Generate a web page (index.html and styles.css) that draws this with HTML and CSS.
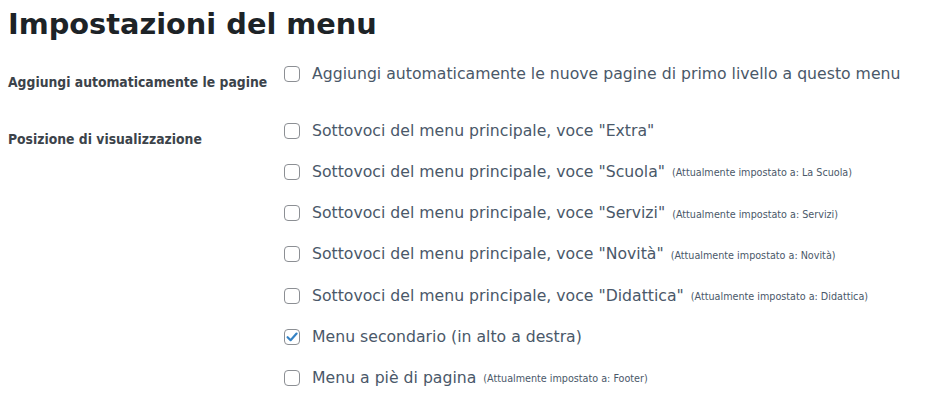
FILE: index.html
```html
<!DOCTYPE html>
<html lang="it">
<head>
<meta charset="utf-8">
<title>Impostazioni del menu</title>
<link rel="stylesheet" href="styles.css">
</head>
<body>
<h2 class="title">Impostazioni del menu</h2>
<div class="form">
  <div class="label">Aggiungi automaticamente le pagine</div>
  <ul class="options">
    <li class="opt"><span class="cb"></span><span class="txt">Aggiungi automaticamente le nuove pagine di primo livello a questo menu</span></li>
  </ul>
  <div class="label">Posizione di visualizzazione</div>
  <ul class="options">
    <li class="opt"><span class="cb"></span><span class="txt">Sottovoci del menu principale, voce "Extra"</span></li>
    <li class="opt"><span class="cb"></span><span class="txt">Sottovoci del menu principale, voce "Scuola"</span><span class="note">(Attualmente impostato a: La Scuola)</span></li>
    <li class="opt"><span class="cb"></span><span class="txt">Sottovoci del menu principale, voce "Servizi"</span><span class="note">(Attualmente impostato a: Servizi)</span></li>
    <li class="opt"><span class="cb"></span><span class="txt">Sottovoci del menu principale, voce "Novità"</span><span class="note">(Attualmente impostato a: Novità)</span></li>
    <li class="opt"><span class="cb"></span><span class="txt">Sottovoci del menu principale, voce "Didattica"</span><span class="note">(Attualmente impostato a: Didattica)</span></li>
    <li class="opt"><span class="cb checked"><svg viewBox="0 0 16 16" width="16" height="16"><path d="M3.6 8.2 L6.6 11.2 L12.6 4.6" fill="none" stroke="#3582c4" stroke-width="2.2" stroke-linecap="round" stroke-linejoin="round"/></svg></span><span class="txt">Menu secondario (in alto a destra)</span></li>
    <li class="opt"><span class="cb"></span><span class="txt">Menu a piè di pagina</span><span class="note">(Attualmente impostato a: Footer)</span></li>
  </ul>
</div>
</body>
</html>
```
FILE: styles.css
```css
html, body {
  margin: 0;
  padding: 0;
  background: #ffffff;
}
body {
  padding: 0 8px;
  font-family: "DejaVu Sans", sans-serif;
  color: #4a5869;
}
.title {
  margin: 7px 0 12px;
  font-size: 28.8px;
  line-height: 34px;
  font-weight: bold;
  color: #1d2327;
}
.form {
  display: grid;
  grid-template-columns: 276px 1fr;
  row-gap: 16px;
}
.label {
  padding-top: 19px;
  font-family: "DejaVu Sans Condensed", "DejaVu Sans", sans-serif;
  font-size: 13.8px;
  line-height: 20px;
  font-weight: bold;
  color: #3c434a;
}
.options {
  list-style: none;
  margin: 0;
  padding: 0;
}
.opt {
  display: flex;
  align-items: center;
  height: 41.2px;
}
.cb {
  flex: none;
  box-sizing: border-box;
  width: 16px;
  height: 16px;
  border: 1px solid #8c8f94;
  border-radius: 4px;
  margin-right: 12px;
  display: flex;
  align-items: center;
  justify-content: center;
  background: #fff;
}
.cb svg {
  display: block;
  margin: -1px;
}
.txt {
  font-size: 15.7px;
  line-height: 22px;
  color: #4a5869;
}
.note {
  font-family: "DejaVu Sans Condensed", "DejaVu Sans", sans-serif;
  font-size: 10.7px;
  line-height: 22px;
  margin-left: 7px;
  padding-top: 3px;
  color: #4a5869;
}
```
